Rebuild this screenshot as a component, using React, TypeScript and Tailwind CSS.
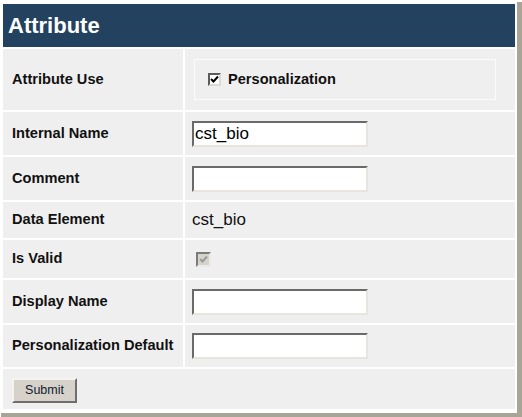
const font = { fontFamily: '"Liberation Sans", Arial, sans-serif' }

function Label({ children }: { children: React.ReactNode }) {
  return (
    <div className="w-[180px] shrink-0 bg-[#efefef] pl-[9px] flex items-center font-bold text-[14.6px] text-[#111]">
      {children}
    </div>
  )
}

function Cell({ children }: { children?: React.ReactNode }) {
  return <div className="flex-1 bg-[#efefef] pl-[7px] flex items-center">{children}</div>
}

function TextInput({ value = '' }: { value?: string }) {
  return (
    <div className="w-[176px] h-[26px] bg-white border-2 border-t-[#6a6a6a] border-l-[#6a6a6a] border-b-[#e8e5e0] border-r-[#e8e5e0] flex items-center pl-px text-[17px] text-black leading-none">
      {value}
    </div>
  )
}

function Check({ disabled }: { disabled?: boolean }) {
  return (
    <span
      className={
        disabled
          ? 'w-[15px] h-[15px] bg-[#d6d3cc] border-2 border-t-[#7b7b7b] border-l-[#7b7b7b] border-b-[#ece9e4] border-r-[#ece9e4] flex items-center justify-center'
          : 'w-[13px] h-[13px] bg-white border-2 border-t-[#5a5a5a] border-l-[#5a5a5a] border-b-[#dcdad5] border-r-[#dcdad5] flex items-center justify-center'
      }
    >
      <svg width="9" height="9" viewBox="0 0 9 9">
        <path
          d="M1 4 L3.5 6.5 L8 1.5"
          fill="none"
          stroke={disabled ? '#9a9a9a' : '#000'}
          strokeWidth="2"
        />
      </svg>
    </span>
  )
}

export default function App() {
  return (
    <div className="w-[522px] h-[417px] bg-white" style={font}>
      <div className="ml-px mt-[2px] w-[521px] border-r-[5px] border-b-[4px] border-[#a9a596]">
        <div className="bg-white px-[2px] pt-[2px] pb-[4px] flex flex-col gap-[2px]">
          {/* Header */}
          <div className="h-[43px] bg-[#23425f] flex items-center pl-[5px] text-white font-bold text-[22px]">
            Attribute
          </div>

          <div className="h-[61px] flex gap-[2px]">
            <Label>Attribute Use</Label>
            <div className="flex-1 bg-[#efefef] pl-[9px] pt-[10px]">
              <div className="w-[302px] h-[41px] border border-[#fbfbfb] flex items-center pl-[13px] gap-[7px]">
                <Check />
                <span className="font-bold text-[14.6px] text-[#111]">Personalization</span>
              </div>
            </div>
          </div>

          <div className="h-[43px] flex gap-[2px]">
            <Label>Internal Name</Label>
            <Cell>
              <TextInput value="cst_bio" />
            </Cell>
          </div>

          <div className="h-[43px] flex gap-[2px]">
            <Label>Comment</Label>
            <Cell>
              <TextInput />
            </Cell>
          </div>

          <div className="h-[36px] flex gap-[2px]">
            <Label>Data Element</Label>
            <Cell>
              <span className="text-[17px] text-[#111]">cst_bio</span>
            </Cell>
          </div>

          <div className="h-[38px] flex gap-[2px]">
            <Label>Is Valid</Label>
            <Cell>
              <span className="ml-[4px]">
                <Check disabled />
              </span>
            </Cell>
          </div>

          <div className="h-[43px] flex gap-[2px]">
            <Label>Display Name</Label>
            <Cell>
              <TextInput />
            </Cell>
          </div>

          <div className="h-[42px] flex gap-[2px]">
            <Label>Personalization Default</Label>
            <Cell>
              <TextInput />
            </Cell>
          </div>

          <div className="h-[40px] bg-[#efefef] pl-[9px] pt-[8px]">
            <button className="w-[65px] h-[25px] bg-[#d6d2c9] border-2 border-t-[#f4f3ef] border-l-[#f4f3ef] border-b-[#6e6e6e] border-r-[#6e6e6e] text-[12.5px] text-[#111a33] leading-none">
              Submit
            </button>
          </div>
        </div>
      </div>
    </div>
  )
}
